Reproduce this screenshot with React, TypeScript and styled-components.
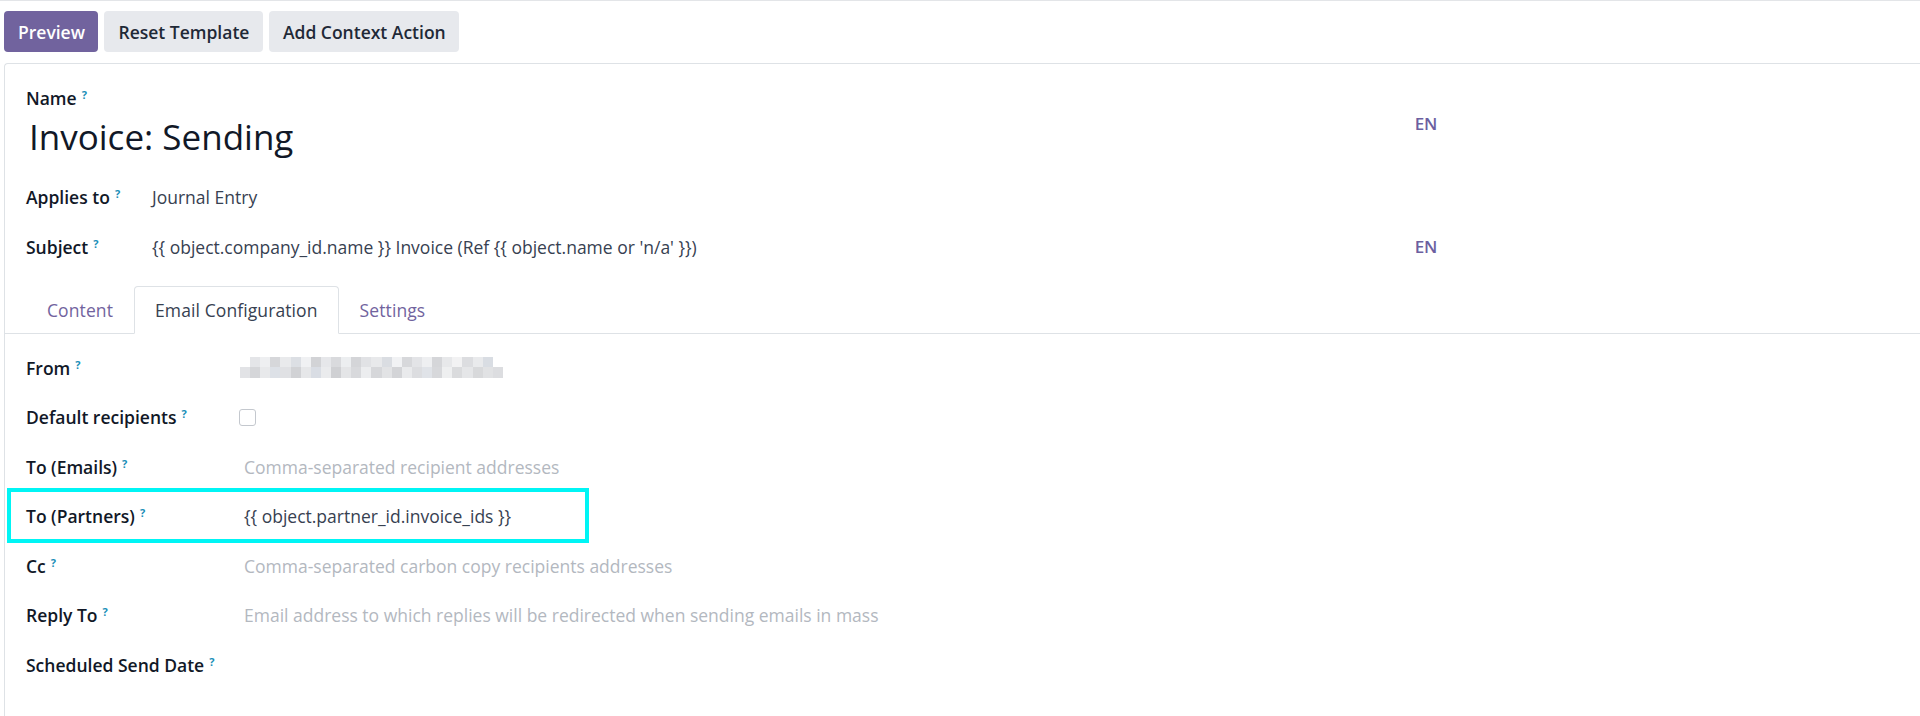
import React from "react";
import styled, { createGlobalStyle, css } from "styled-components";

const GlobalStyle = createGlobalStyle`
  html, body {
    margin: 0;
    padding: 0;
    background: #ffffff;
    height: 716px;
    overflow: hidden;
  }
  body {
    font-family: "Open Sans", "Noto Sans", sans-serif;
    font-size: 17.5px;
    line-height: 26px;
    color: #374151;
  }
  *, *::before, *::after {
    box-sizing: border-box;
  }
`;

// pixelated "from" address, two rows of cells
const MOSAIC: string[][] = [
  ["#ffffff", "#e4e5e8", "#eeeff1", "#d6d7da", "#e9eaec", "#dcdfe4", "#f0f1f3", "#d2d3d6", "#e6e7ea", "#d9dadd", "#eceef0", "#d4d5d8", "#e1e2e5", "#e8e9eb", "#dadde2", "#f1f2f4", "#d7d8db", "#e3e4e7", "#eeeff1", "#d5d6d9", "#e7e8ea", "#f2f2f3", "#dcdde0", "#e9eaec", "#d9dde3", "#ffffff"],
  ["#e2e3e6", "#d5d6d9", "#e8e9eb", "#dde1e7", "#e0e1e4", "#d1d2d5", "#e6e7e9", "#d9dde4", "#eaebed", "#cfd0d3", "#e4e5e7", "#d8d9dc", "#ecedef", "#d6d7da", "#e2e3e5", "#d3d4d7", "#e9eaec", "#dcdde0", "#e0e3e8", "#d7d8db", "#eeeff0", "#dadbdd", "#e5e6e8", "#d8d9db", "#e1e2e4", "#dcdde0"],
];

const App = () => {
  return (
    <>
      <GlobalStyle />
      <Page>
        <ControlBar>
          <ActionButton $primary>Preview</ActionButton>
          <ActionButton>Reset Template</ActionButton>
          <ActionButton>Add Context Action</ActionButton>
        </ControlBar>

        <Sheet>
          <SheetHeader>
            <NameLabel>
              Name<Help>?</Help>
            </NameLabel>
            <TitleRow>
              <Title>Invoice: Sending</Title>
              <Lang>EN</Lang>
            </TitleRow>
            <HeaderGrid>
              <Label>
                Applies to<Help>?</Help>
              </Label>
              <Value>Journal Entry</Value>
              <Label>
                Subject<Help>?</Help>
              </Label>
              <ValueWithLang>
                <Value>
                  {"{{ object.company_id.name }} Invoice (Ref {{ object.name or 'n/a' }})"}
                </Value>
                <Lang>EN</Lang>
              </ValueWithLang>
            </HeaderGrid>
          </SheetHeader>

          <Tabs>
            <Tab>Content</Tab>
            <Tab $active>Email Configuration</Tab>
            <Tab>Settings</Tab>
          </Tabs>

          <TabBody>
            <FieldRow>
              <Label>
                From<Help>?</Help>
              </Label>
              <Mosaic>
                {MOSAIC.map((row, r) => (
                  <MosaicRow key={r}>
                    {row.map((c, i) => (
                      <MosaicCell key={i} style={{ background: c }} />
                    ))}
                  </MosaicRow>
                ))}
              </Mosaic>
            </FieldRow>
            <FieldRow>
              <Label>
                Default recipients<Help>?</Help>
              </Label>
              <Checkbox />
            </FieldRow>
            <FieldRow>
              <Label>
                To (Emails)<Help>?</Help>
              </Label>
              <InputValue $placeholder>Comma-separated recipient addresses</InputValue>
            </FieldRow>
            <FieldRow $highlight>
              <Label>
                To (Partners)<Help>?</Help>
              </Label>
              <InputValue>{"{{ object.partner_id.invoice_ids }}"}</InputValue>
            </FieldRow>
            <FieldRow>
              <Label>
                Cc<Help>?</Help>
              </Label>
              <InputValue $placeholder>Comma-separated carbon copy recipients addresses</InputValue>
            </FieldRow>
            <FieldRow>
              <Label>
                Reply To<Help>?</Help>
              </Label>
              <InputValue $placeholder>
                Email address to which replies will be redirected when sending emails in mass
              </InputValue>
            </FieldRow>
            <FieldRow>
              <Label>
                Scheduled Send Date<Help>?</Help>
              </Label>
              <InputValue />
            </FieldRow>
          </TabBody>
        </Sheet>
      </Page>
    </>
  );
};

export default App;

// Styled Components
const Page = styled.div`
  height: 716px;
  border-top: 1px solid #e3e5e8;
  overflow: hidden;
`;

const ControlBar = styled.div`
  display: flex;
  gap: 6px;
  padding: 10px 0 0 4px;
`;

const ActionButton = styled.button<{ $primary?: boolean }>`
  height: 41px;
  padding: 0 13.5px 0 14px;
  border: none;
  border-radius: 4px;
  font-family: inherit;
  font-size: 17.5px;
  font-weight: 600;
  color: #1f2937;
  background: #e7e9ed;
  cursor: pointer;

  ${({ $primary }) =>
    $primary &&
    css`
      color: #ffffff;
      background: #71639e;
    `}
`;

const Sheet = styled.div`
  margin: 11px 0 0 4px;
  border-top: 1px solid #dee2e6;
  border-left: 1px solid #dee2e6;
  border-top-left-radius: 4px;
  min-height: 800px;
`;

const SheetHeader = styled.div`
  padding: 21px 0 0 21px;
  width: 1432px;
`;

const NameLabel = styled.div`
  font-weight: 600;
  color: #111827;
`;

const Help = styled.sup`
  display: inline-block;
  margin-left: 5px;
  font-size: 11px;
  line-height: 1;
  font-weight: 700;
  color: #1a8fb8;
  vertical-align: top;
  position: relative;
  top: 4px;
`;

const TitleRow = styled.div`
  display: flex;
  align-items: flex-start;
  justify-content: space-between;
  width: 1411px;
`;

const Title = styled.h1`
  margin: 0;
  padding-left: 3px;
  font-size: 35px;
  line-height: 52px;
  font-weight: 400;
  color: #111827;
`;

const Lang = styled.span`
  font-size: 17px;
  font-weight: 600;
  letter-spacing: -0.3px;
  color: #6c5fa0;
`;

const HeaderGrid = styled.div`
  display: grid;
  grid-template-columns: 126px 1285px;
  grid-auto-rows: 50px;
  align-items: center;
  margin-top: 9px;
`;

const Label = styled.div`
  font-weight: 600;
  color: #111827;
  white-space: nowrap;
`;

const Value = styled.div`
  color: #374151;
  white-space: nowrap;
`;

const ValueWithLang = styled.div`
  display: flex;
  align-items: center;
  justify-content: space-between;
`;

const Tabs = styled.div`
  display: flex;
  margin-top: 14px;
  padding-left: 21px;
  border-bottom: 1px solid #dee2e6;
`;

const Tab = styled.div<{ $active?: boolean }>`
  padding: 10px 20px;
  margin-bottom: -1px;
  border: 1px solid transparent;
  border-radius: 4px 4px 0 0;
  letter-spacing: 0.1px;
  color: #71639e;

  ${({ $active }) =>
    $active &&
    css`
      color: #374151;
      background: #ffffff;
      border-color: #dee2e6 #dee2e6 #ffffff;
    `}
`;

const TabBody = styled.div`
  padding: 9px 0 0 21px;
`;

const FieldRow = styled.div<{ $highlight?: boolean }>`
  position: relative;
  display: grid;
  grid-template-columns: 214px 1fr;
  align-items: center;
  height: 49.5px;

  ${({ $highlight }) =>
    $highlight &&
    css`
      &::after {
        content: "";
        position: absolute;
        top: -4px;
        left: -19px;
        width: 582px;
        height: 55px;
        border: 4px solid #00f5f5;
        pointer-events: none;
      }
    `}
`;

const InputValue = styled.div<{ $placeholder?: boolean }>`
  padding-left: 4px;
  white-space: nowrap;
  color: ${({ $placeholder }) => ($placeholder ? "#b3b8bf" : "#374151")};
`;

const Mosaic = styled.div`
  display: flex;
  flex-direction: column;
  width: 263px;
  margin-top: -1px;
`;

const MosaicRow = styled.div`
  display: flex;
  height: 10.5px;
`;

const MosaicCell = styled.span`
  flex: 1;
`;

const Checkbox = styled.span`
  display: block;
  width: 17px;
  height: 17px;
  margin-left: -1px;
  border: 1px solid #c4c8ce;
  border-radius: 3px;
  background: #ffffff;
`;
